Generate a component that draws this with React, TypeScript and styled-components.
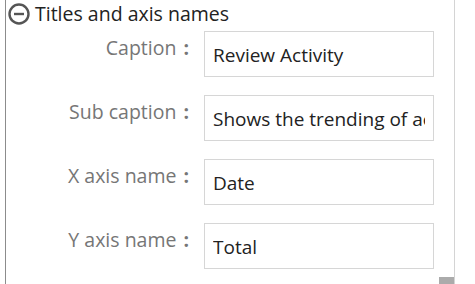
import React from "react";
import styled, { createGlobalStyle } from "styled-components";

const Global = createGlobalStyle`
  html, body { margin: 0; padding: 0; background: #fff; }
  body { font-family: "Open Sans", "Liberation Sans", sans-serif; }
`;

const Panel = styled.div`
  position: relative;
  box-sizing: border-box;
  margin-left: 5px;
  width: 450px;
  height: 284px;
  border-left: 1px solid #8c8c8c;
  border-right: 1px solid #d4d4d4;
  overflow: hidden;
`;

const Header = styled.div`
  display: flex;
  align-items: center;
  gap: 4px;
  padding: 2px 0 0 1px;
  height: 24px;
`;

const Title = styled.span`
  font-size: 19.5px;
  line-height: 24px;
  color: #222;
`;

const Rows = styled.div`
  display: grid;
  grid-template-columns: 184px 230px;
  column-gap: 14px;
  row-gap: 18px;
  margin-top: 5px;
`;

const Label = styled.label`
  display: flex;
  justify-content: flex-end;
  align-items: flex-start;
  font-size: 19.5px;
  line-height: 24px;
  padding-top: 5px;
  color: #767676;
  white-space: nowrap;
`;

const Colon = styled.span`
  margin-left: 7px;
  margin-right: 1px;
  font-weight: 700;
`;

const Field = styled.input`
  box-sizing: border-box;
  width: 230px;
  height: 46px;
  border: 1px solid #d6d6d6;
  padding: 2px 8px 0 8px;
  margin: 0;
  font-family: "Open Sans", "Liberation Sans", sans-serif;
  font-size: 19px;
  color: #222;
  background: #fff;
  outline: none;
`;

const Thumb = styled.div`
  position: absolute;
  right: 0;
  bottom: 0;
  width: 15px;
  height: 7px;
  background: #ababab;
`;

const fields = [
  { label: "Caption", value: "Review Activity" },
  { label: "Sub caption", value: "Shows the trending of activity" },
  { label: "X axis name", value: "Date" },
  { label: "Y axis name", value: "Total" },
];

function MinusCircle() {
  return (
    <svg width="24" height="24" viewBox="0 0 24 24">
      <circle cx="12" cy="12" r="9.5" fill="none" stroke="#555" strokeWidth="2.4" />
      <line x1="7" y1="12" x2="17" y2="12" stroke="#555" strokeWidth="2.4" />
    </svg>
  );
}

export default function App() {
  return (
    <>
      <Global />
      <Panel>
        <Header>
          <MinusCircle />
          <Title>Titles and axis names</Title>
        </Header>
        <Rows>
          {fields.map((f) => (
            <React.Fragment key={f.label}>
              <Label>
                {f.label}
                <Colon>:</Colon>
              </Label>
              <Field readOnly value={f.value} />
            </React.Fragment>
          ))}
        </Rows>
        <Thumb />
      </Panel>
    </>
  );
}
